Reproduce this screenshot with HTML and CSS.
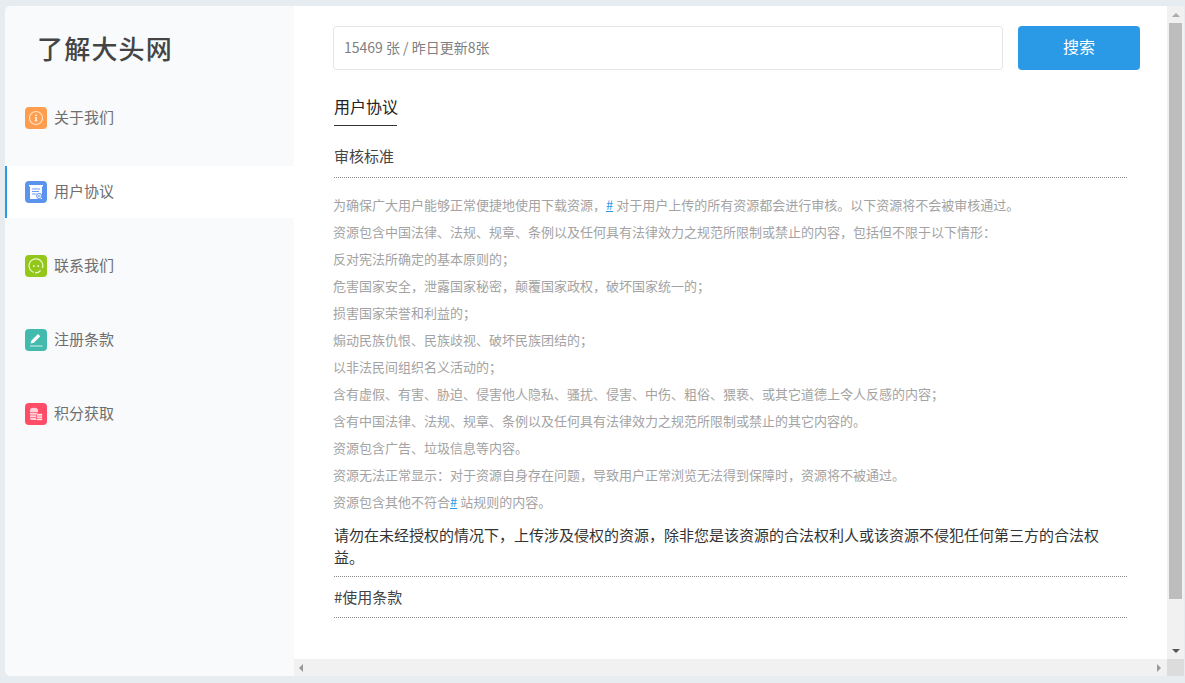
FILE: index.html
```html
<!DOCTYPE html>
<html lang="zh-CN">
<head>
<meta charset="utf-8">
<title>用户协议</title>
<link rel="stylesheet" href="styles.css">
</head>
<body>
<div class="window">
  <aside class="sidebar">
    <h1 class="logo">了解大头网</h1>
    <nav class="nav">
      <a class="nav-item"><span class="ico ico-orange"><svg viewBox="0 0 22 22"><circle cx="11" cy="11" r="6.500" fill="none" stroke="#ffe3c4" stroke-width="1.100"/><rect x="10.300" y="7.600" width="1.500" height="1.500" fill="#fff"/><path d="M9.800 10h1.900v3.400h.8v.8H9.600v-.8h.8v-2.600h-.6z" fill="#fff"/></svg></span><span class="nav-label">关于我们</span></a>
      <a class="nav-item active"><span class="ico ico-blue"><svg viewBox="0 0 22 22"><path d="M4 4h14v1.600h-1V18H5V5.600H4z" fill="#fff"/><path d="M7 8h8M7 10.500h7M7 13h4.500" stroke="#6b9bf0" stroke-width="1" fill="none"/><circle cx="14.200" cy="15" r="2.600" fill="#fff" stroke="#5b93ee" stroke-width="1"/><path d="M13 14.400h2.400M13 15.600h2.400" stroke="#5b93ee" stroke-width=".7"/></svg></span><span class="nav-label">用户协议</span></a>
      <a class="nav-item"><span class="ico ico-green"><svg viewBox="0 0 22 22"><path d="M8.600 17.400A7 7 0 1 1 17.600 13" fill="none" stroke="#eef7c8" stroke-width="1.200"/><path d="M10 17.900a7 7 0 0 0 5.600-2.400" fill="none" stroke="#eef7c8" stroke-width="1.200"/><rect x="8" y="10.300" width="1.500" height="1.500" fill="#fff"/><rect x="12.500" y="10.300" width="1.500" height="1.500" fill="#fff"/></svg></span><span class="nav-label">联系我们</span></a>
      <a class="nav-item"><span class="ico ico-teal"><svg viewBox="0 0 22 22"><path d="M5.500 14.500l1-3 6.500-6.500 2.300 2.300-6.500 6.500z" fill="#fff"/><path d="M5 17h12.500" stroke="#bfe9e2" stroke-width="1.200"/></svg></span><span class="nav-label">注册条款</span></a>
      <a class="nav-item"><span class="ico ico-red"><svg viewBox="0 0 22 22"><path d="M5 7c0-3 8-3 8 0v10H7c-1 0-2-.6-2-1.500z" fill="#ffd3da"/><path d="M5 9.500h8M5 12h8M5 14.500h8" stroke="#ff4d68" stroke-width=".7"/><rect x="11.500" y="10.500" width="6" height="7" rx="1.200" fill="#ffe6ea" stroke="#ff4d68" stroke-width=".7"/><path d="M11.500 13h6M11.500 15.300h6" stroke="#ff4d68" stroke-width=".7"/></svg></span><span class="nav-label">积分获取</span></a>
    </nav>
  </aside>

  <div class="viewport">
    <main class="content">
      <div class="search">
        <div class="search-input">15469 张 / 昨日更新8张</div>
        <button class="search-btn">搜索</button>
      </div>

      <div class="tab-row"><span class="tab">用户协议</span></div>

      <h2 class="sec-title">审核标准</h2>
      <div class="rules">
        <p>为确保广大用户能够正常便捷地使用下载资源，<a class="link">#</a> 对于用户上传的所有资源都会进行审核。以下资源将不会被审核通过。</p>
        <p>资源包含中国法律、法规、规章、条例以及任何具有法律效力之规范所限制或禁止的内容，包括但不限于以下情形：</p>
        <p>反对宪法所确定的基本原则的；</p>
        <p>危害国家安全，泄露国家秘密，颠覆国家政权，破坏国家统一的；</p>
        <p>损害国家荣誉和利益的；</p>
        <p>煽动民族仇恨、民族歧视、破坏民族团结的；</p>
        <p>以非法民间组织名义活动的；</p>
        <p>含有虚假、有害、胁迫、侵害他人隐私、骚扰、侵害、中伤、粗俗、猥亵、或其它道德上令人反感的内容；</p>
        <p>含有中国法律、法规、规章、条例以及任何具有法律效力之规范所限制或禁止的其它内容的。</p>
        <p>资源包含广告、垃圾信息等内容。</p>
        <p>资源无法正常显示：对于资源自身存在问题，导致用户正常浏览无法得到保障时，资源将不被通过。</p>
        <p>资源包含其他不符合<a class="link">#</a> 站规则的内容。</p>
      </div>
      <p class="notice">请勿在未经授权的情况下，上传涉及侵权的资源，除非您是该资源的合法权利人或该资源不侵犯任何第三方的合法权益。</p>
      <h2 class="sec-title sec-second">#使用条款</h2>
    </main>
    <div class="hbar">
      <span class="arrow arrow-left"></span>
      <span class="arrow arrow-right"></span>
    </div>
  </div>

  <div class="vbar">
    <div class="vbtn"><span class="arrow arrow-up"></span></div>
    <div class="vthumb"></div>
    <div class="vbtn vbtn-down"><span class="arrow arrow-down"></span></div>
    <div class="corner"></div>
  </div>
</div>
</body>
</html>
```

FILE: styles.css
```css
* { box-sizing: border-box; }
html, body { height: 100%; }
body {
  margin: 0;
  padding: 6px 1px 7px 5px;
  background: #e6ecef;
  font-family: "Noto Sans CJK SC", "Liberation Sans", sans-serif;
  overflow: hidden;
}
.window {
  display: flex;
  height: 670px;
  background: #fff;
  border-radius: 6px 0 0 6px;
  overflow: hidden;
}
.sidebar {
  width: 289px;
  flex: none;
  background: #f8fafc;
}
.logo {
  margin: 0;
  height: 86px;
  padding: 27px 0 0 32px;
  font-family: "Liberation Serif", "Noto Sans CJK SC", serif;
  font-size: 26px;
  line-height: 36px;
  font-weight: 500;
  letter-spacing: 1.200px;
  color: #444;
}
.nav { display: flex; flex-direction: column; gap: 22px; }
.nav-item {
  display: flex;
  align-items: center;
  gap: 8px;
  height: 52px;
  padding-left: 20px;
  font-size: 15px;
  color: #6e6e6e;
}
.nav-label { padding-bottom: 4px; margin-left: -1px; }
.nav-item.active {
  background: #fff;
  border-left: 2px solid #2a99e6;
  padding-left: 18px;
}
.ico {
  width: 22px;
  height: 22px;
  flex: none;
  border-radius: 4px;
  display: block;
}
.ico svg { display: block; width: 22px; height: 22px; }
.ico-orange { background: #ff9d4f; }
.ico-blue { background: #5b93ee; }
.ico-green { background: #93c71b; }
.ico-teal { background: #42bbae; }
.ico-red { background: #ff4d68; }

.viewport {
  flex: none;
  width: 873px;
  display: flex;
  flex-direction: column;
}
.content {
  flex: 1;
  padding: 20px 27px 0 39px;
  overflow: hidden;
}
.search { display: flex; gap: 15px; height: 44px; }
.search-input {
  width: 670px;
  border: 1px solid #e5e5e5;
  border-radius: 4px;
  padding-left: 10px;
  font-size: 14px;
  line-height: 40px;
  color: #808080;
}
.search-btn {
  width: 122px;
  border: 0;
  border-radius: 4px;
  background: #2a99e6;
  color: #fff;
  font: 16px/40px "Noto Sans CJK SC", sans-serif;
  padding: 0 0 4px;
}
.tab-row { margin: 24px 0 0 1px; height: 32px; }
.tab {
  display: inline-block;
  height: 32px;
  width: 63px;
  white-space: nowrap;
  border-bottom: 1px solid #333;
  font-size: 16px;
  line-height: 24px;
  color: #222;
}
.sec-title {
  margin: 0 0 0 1px;
  width: 793px;
  height: 52px;
  padding-top: 18px;
  font-size: 15px;
  line-height: 24px;
  font-weight: 400;
  color: #444;
  border-bottom: 1px dotted #888;
}
.rules { padding-top: 13px; }
.rules p {
  margin: 0;
  font-size: 13px;
  line-height: 27px;
  color: #a3a3a3;
  white-space: nowrap;
}
.link { color: #2a99e6; text-decoration: underline; }
.notice {
  width: 770px;
  margin: 9px 0 0 1px;
  font-size: 15px;
  line-height: 22px;
  color: #333;
}
.sec-second {
  height: 42px;
  padding-top: 8px;
  border-top: 1px dotted #888;
  margin-top: 8px;
}
.hbar {
  flex: none;
  height: 17px;
  background: #f1f1f1;
  display: flex;
  align-items: center;
  justify-content: space-between;
  padding: 0 6px 0 5px;
}
.arrow { display: block; width: 0; height: 0; border: 4px solid transparent; }
.arrow-left { border-right-color: #999; border-left-width: 0; }
.arrow-right { border-left-color: #999; border-right-width: 0; }
.arrow-up { border-bottom-color: #aaa; border-top-width: 0; }
.arrow-down { border-top-color: #555; border-bottom-width: 0; }

.vbar {
  flex: none;
  width: 17px;
  background: #f1f1f1;
  display: flex;
  flex-direction: column;
  align-items: center;
}
.vbtn {
  flex: none;
  height: 17px;
  width: 100%;
  display: flex;
  align-items: center;
  justify-content: center;
}
.vthumb {
  flex: none;
  width: 13px;
  height: 576px;
  background: #bdbdbd;
}
.vbtn-down { margin-top: 43px; }
.corner { flex: none; width: 100%; height: 17px; background: #dcdcdc; }
```
